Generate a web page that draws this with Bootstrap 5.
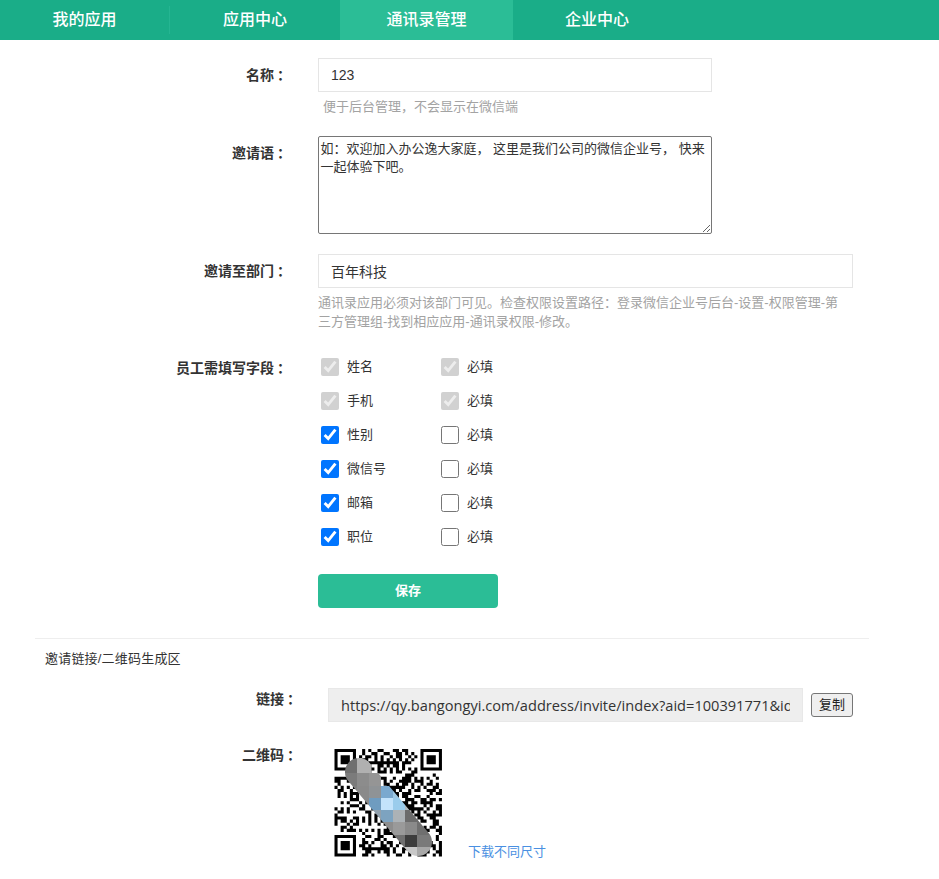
<!DOCTYPE html>
<html lang="zh"><head><meta charset="utf-8">
<link href="https://cdn.jsdelivr.net/npm/bootstrap@5.3.0/dist/css/bootstrap.min.css" rel="stylesheet">
<style>
body{font-family:"Liberation Sans","Noto Sans CJK SC",sans-serif;font-size:13px;color:#333;background:#fff}
.topbar{background:#1aad88;height:40px}
.topbar a{width:170px;height:40px;line-height:40px;color:#fff;font-size:16px;font-weight:500;text-align:center;text-decoration:none;display:block}
.topbar a.now{background:#2bbd96;width:173px}
.topbar a.last{width:168px}
.topbar a.nav-sep{border-right:1px solid #25b592;height:28px;line-height:28px;margin-top:6px}
.field-row{display:flex}
.lbl{width:288px;text-align:right;font-weight:700;color:#333;flex:none;font-size:14px;line-height:34px}
.lbl-tall{line-height:36px}
.lbl-wide{width:298px;line-height:22px}
.lbl-qr{line-height:14px}
.colon-mark{margin:0 -3px 0 3px}
.body-col{margin-left:30px}
.txt-input{height:34px;border:1px solid #e5e5e5;padding:0 12px;font-size:14px;color:#333;display:block;outline:0;background:#fff}
.hint{color:#a3a3a3;line-height:19px}
.invite-box{width:394px;height:98px;border:1px solid #767676;border-radius:2px;padding:3px 1.5px;font-size:13px;line-height:18px;color:#333;display:block;font-family:inherit}
.field-check{width:18px;height:18px;margin:0;flex:none}
.chk-row{height:34px;display:flex;align-items:center;padding-left:3px}
.chk-cell{width:120px;display:flex;align-items:center;gap:8px}
.save-btn{width:180px;height:34px;background:#2bbd96;color:#fff;font-weight:700;border:0;border-radius:4px;font-size:13px}
.gen-sec{margin:30px 70px 0 35px;border-top:1px solid #eee}
.gen-title{padding-left:10px;line-height:19px;margin-top:10px;color:#333;letter-spacing:.2px}
.link-input{width:475px;height:34px;background:#eee;border:1px solid #e8e8e8;padding:0 12px;font:14.6px/32px "Open Sans",sans-serif;color:#333;outline:0;flex:none}
.copy-btn{height:24px;width:42px;padding:0;font-size:13px;border:1px solid #767676;border-radius:3px;background:#efefef;color:#222;margin-left:8px}
.dl-link{color:#4a90e2;text-decoration:none;margin-left:25px;line-height:17px;margin-bottom:-2px}
.qr-pic{display:block;flex:none;width:110px;height:110px}
</style></head><body>
<nav class="topbar d-flex">
<a class="nav-sep" href="#">我的应用</a><a href="#">应用中心</a><a class="now" href="#">通讯录管理</a><a class="last" href="#">企业中心</a>
</nav>
<form>
<div class="field-row" style="margin-top:18px"><div class="lbl">名称<span class="colon-mark">：</span></div><div class="body-col"><input class="txt-input" style="width:394px" value="123"><div class="hint" style="margin:5px 0 0 5px">便于后台管理，不会显示在微信端</div></div></div>
<div class="field-row" style="margin-top:20px"><div class="lbl">邀请语<span class="colon-mark">：</span></div><div class="body-col"><textarea class="invite-box">如：欢迎加入办公逸大家庭， 这里是我们公司的微信企业号， 快来一起体验下吧。</textarea></div></div>
<div class="field-row" style="margin-top:20px"><div class="lbl">邀请至部门<span class="colon-mark">：</span></div><div class="body-col"><input class="txt-input" style="width:535px" value="百年科技"><div class="hint" style="margin-top:5px;width:530px">通讯录应用必须对该部门可见。检查权限设置路径：登录微信企业号后台-设置-权限管理-第三方管理组-找到相应应用-通讯录权限-修改。</div></div></div>
<div class="field-row" style="margin-top:19px"><div class="lbl lbl-tall">员工需填写字段<span class="colon-mark">：</span></div><div class="body-col">
<div class="chk-row"><label class="chk-cell"><input type="checkbox" class="field-check" checked disabled>姓名</label><label class="chk-cell"><input type="checkbox" class="field-check" checked disabled>必填</label></div>
<div class="chk-row"><label class="chk-cell"><input type="checkbox" class="field-check" checked disabled>手机</label><label class="chk-cell"><input type="checkbox" class="field-check" checked disabled>必填</label></div>
<div class="chk-row"><label class="chk-cell"><input type="checkbox" class="field-check" checked>性别</label><label class="chk-cell"><input type="checkbox" class="field-check">必填</label></div>
<div class="chk-row"><label class="chk-cell"><input type="checkbox" class="field-check" checked>微信号</label><label class="chk-cell"><input type="checkbox" class="field-check">必填</label></div>
<div class="chk-row"><label class="chk-cell"><input type="checkbox" class="field-check" checked>邮箱</label><label class="chk-cell"><input type="checkbox" class="field-check">必填</label></div>
<div class="chk-row"><label class="chk-cell"><input type="checkbox" class="field-check" checked>职位</label><label class="chk-cell"><input type="checkbox" class="field-check">必填</label></div>
<button type="button" class="save-btn" style="margin-top:20px">保存</button>
</div></div>
</form>
<div class="gen-sec"><div class="gen-title">邀请链接/二维码生成区</div></div>
<div class="field-row" style="margin-top:20px"><div class="lbl lbl-wide">链接<span class="colon-mark">：</span></div><div class="d-flex align-items-center" style="margin-left:30px"><input class="link-input" value="https://qy.bangongyi.com/address/invite/index?aid=100391771&amp;id=2100"><button type="button" class="copy-btn">复制</button></div></div>
<div class="field-row" style="margin-top:26px"><div class="lbl lbl-wide lbl-qr">二维码<span class="colon-mark">：</span></div><div class="d-flex align-items-end" style="margin-left:35px">
<svg class="qr-pic" viewBox="333 748 110 110" xmlns="http://www.w3.org/2000/svg" aria-label="二维码">
<defs><mask id="bandmask"><line x1="359" y1="772" x2="418" y2="842" stroke="#fff" stroke-width="28" stroke-linecap="round"/></mask></defs>
<path id="qrmods" fill="#000"/>
<g mask="url(#bandmask)" shape-rendering="crispEdges">
<rect x="333" y="756" width="24" height="17" fill="#6f6f6f"/><rect x="357" y="756" width="14" height="17" fill="#b0b0b0"/>
<rect x="333" y="773" width="24" height="13" fill="#7b7b7b"/><rect x="357" y="773" width="12" height="13" fill="#8c8c8c"/><rect x="369" y="773" width="12" height="13" fill="#959595"/>
<rect x="345" y="786" width="12" height="12" fill="#7f7f7f"/><rect x="357" y="786" width="12" height="12" fill="#8a8a8a"/><rect x="369" y="786" width="12" height="12" fill="#8f9396"/><rect x="381" y="786" width="12" height="12" fill="#7aa9cf"/><rect x="393" y="786" width="12" height="12" fill="#9ec8e4"/>
<rect x="357" y="798" width="12" height="12" fill="#8a8a8a"/><rect x="369" y="798" width="12" height="12" fill="#6f9cc0"/><rect x="381" y="798" width="12" height="12" fill="#c3e3fb"/><rect x="393" y="798" width="12" height="12" fill="#9accec"/><rect x="405" y="798" width="12" height="12" fill="#b0bac0"/>
<rect x="369" y="810" width="12" height="12" fill="#90a0ad"/><rect x="381" y="810" width="12" height="12" fill="#7da3c0"/><rect x="393" y="810" width="12" height="12" fill="#acb2b6"/><rect x="405" y="810" width="12" height="12" fill="#6b6b6b"/><rect x="417" y="810" width="14" height="12" fill="#6b6b6b"/>
<rect x="381" y="822" width="12" height="13" fill="#8d8d8d"/><rect x="393" y="822" width="12" height="13" fill="#9a9a9a"/><rect x="405" y="822" width="12" height="13" fill="#8a8a8a"/><rect x="417" y="822" width="16" height="13" fill="#6f6f6f"/>
<rect x="381" y="835" width="12" height="12" fill="#8d8d8d"/><rect x="393" y="835" width="12" height="12" fill="#707070"/><rect x="405" y="835" width="12" height="12" fill="#3d3d3d"/><rect x="417" y="835" width="16" height="12" fill="#7a7a7a"/>
<rect x="393" y="847" width="12" height="10" fill="#b8b8b8"/><rect x="405" y="847" width="12" height="11" fill="#c8c8c8"/><rect x="417" y="847" width="16" height="10" fill="#a8a8a8"/>
</g></svg>
<a class="dl-link" href="#">下载不同尺寸</a></div></div>
<script>
var n=35,u=3.07,x0=334.5,y0=749,d="",seed=73911;
function rnd(){seed=(seed*1103515245+12345)%2147483648;return (seed>>>12)&1;}
function sq(c,r,w,h){d+="M"+(x0+c*u).toFixed(2)+" "+(y0+r*u).toFixed(2)+"h"+(w*u).toFixed(2)+"v"+(h*u).toFixed(2)+"h"+(-w*u).toFixed(2)+"z";}
function reserved(c,r){return (c<8&&r<8)||(c>=n-8&&r<8)||(c<8&&r>=n-8);}
for(var r=0;r<n;r++){for(var c=0;c<n;c++){var b=rnd();
if(reserved(c,r))continue;
if(r===6)b=c%2===0;else if(c===6)b=r%2===0;
if(b)sq(c,r,1,1);}}
[[0,0],[n-7,0],[0,n-7]].forEach(function(f){var a=f[0],b=f[1];sq(a,b,7,1);sq(a,b+6,7,1);sq(a,b+1,1,5);sq(a+6,b+1,1,5);sq(a+2,b+2,3,3);});
document.getElementById("qrmods").setAttribute("d",d);
</script>
<script src="https://cdn.jsdelivr.net/npm/bootstrap@5.3.0/dist/js/bootstrap.bundle.min.js"></script>
</body></html>
